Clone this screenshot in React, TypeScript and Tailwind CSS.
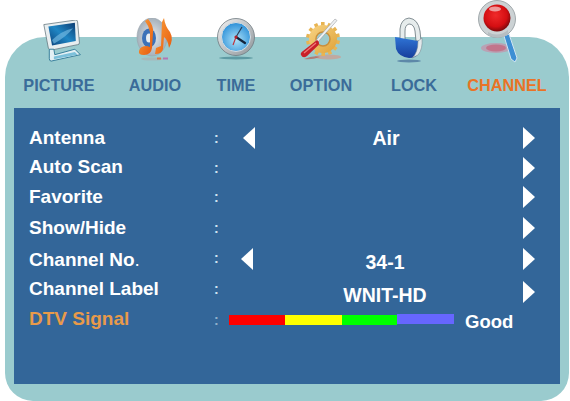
const font = { fontFamily: '"Liberation Sans", Arial, sans-serif' };

function IconPicture() {
  return (
    <svg width="44" height="42" viewBox="0 0 44 46" className="ml-[8px]">
      <defs>
        <linearGradient id="scr" x1="0" y1="1" x2="1" y2="0">
          <stop offset="0" stopColor="#0b3f78" />
          <stop offset="0.5" stopColor="#1f86c4" />
          <stop offset="1" stopColor="#0c3b70" />
        </linearGradient>
      </defs>
      <path d="M1 5 L36 0 Q38 0 38 2 L40 25 Q40 27 38 27 L9 33 Q7 33 6 31 Z" fill="#e8eef0" stroke="#5c6f78" strokeWidth="0.8" />
      <path d="M6 7 L35 3 L36 23 L10 28 Z" fill="url(#scr)" />
      <path d="M10 22 Q20 12 33 9 Q26 18 12 26 Z" fill="#6fb7df" opacity="0.7" />
      <path d="M7 32 L12 32 L13 38 L35 32 L41 38 L9 45 Q7 45 7 42 Z" fill="#e4f0f4" stroke="#2d7896" strokeWidth="1" />
      <path d="M12 40 L35 35 L38 38 L12 43 Z" fill="#7cc0da" />
    </svg>
  );
}

function IconAudio() {
  return (
    <svg width="38" height="44" viewBox="0 0 38 44">
      <defs>
        <radialGradient id="cd" cx="0.5" cy="0.5" r="0.6">
          <stop offset="0" stopColor="#e6eaef" />
          <stop offset="1" stopColor="#98a5b0" />
        </radialGradient>
        <linearGradient id="note" x1="0" y1="0" x2="1" y2="1">
          <stop offset="0" stopColor="#f9a03c" />
          <stop offset="1" stopColor="#e8590c" />
        </linearGradient>
      </defs>
      <ellipse cx="16" cy="19" rx="15" ry="19" fill="url(#cd)" stroke="#9aa5ad" strokeWidth="0.6" />
      <ellipse cx="13" cy="20" rx="7" ry="9.5" fill="#3c72b8" />
      <ellipse cx="13" cy="20" rx="3" ry="4.5" fill="#e8eef2" />
      <path d="M9 3 L12 1 Q18 8 17 15 L16 30 Q15 37 8 37 Q2 37 3 33 Q4 28 11 28 L14 29 L14 14 Q13 8 9 3 Z" fill="url(#note)" />
      <path d="M28 0 Q29 8 34 14 Q38 21 33 30 Q32 22 28 19 L27 31 Q26 36 19 36 L20 30 L25 28 L26 4 Z" fill="url(#note)" />
      <ellipse cx="16" cy="41" rx="11" ry="1.6" fill="#a6b9bb" />
      <rect x="21" y="39.5" width="4" height="2" fill="#d67a4a" />
      <rect x="27" y="39.5" width="5" height="2" fill="#b277b3" />
    </svg>
  );
}

function IconTime() {
  return (
    <svg width="40" height="42" viewBox="0 0 40 42">
      <defs>
        <radialGradient id="face" cx="0.5" cy="0.6" r="0.6">
          <stop offset="0" stopColor="#aee2f8" />
          <stop offset="1" stopColor="#2a8fd8" />
        </radialGradient>
        <linearGradient id="rim" x1="0" y1="0" x2="1" y2="1">
          <stop offset="0" stopColor="#f2f2f2" />
          <stop offset="1" stopColor="#8d9499" />
        </linearGradient>
      </defs>
      <circle cx="20" cy="19" r="18.5" fill="url(#rim)" stroke="#6f7a80" strokeWidth="0.8" />
      <circle cx="20" cy="19" r="14.5" fill="url(#face)" stroke="#d8dde0" strokeWidth="1" />
      <path d="M20 19 L29 25" stroke="#13233a" strokeWidth="2.2" strokeLinecap="round" />
      <path d="M20 19 L26 9" stroke="#2c3d55" strokeWidth="1.2" />
      <path d="M20 19 L17 27" stroke="#c0303a" strokeWidth="1.2" />
      <circle cx="20" cy="19" r="1.6" fill="#b3202a" />
      <ellipse cx="20" cy="40" rx="17" ry="1.5" fill="#5e9aa3" />
    </svg>
  );
}

function IconOption() {
  const teeth = Array.from({ length: 14 }, (_, i) => i * (360 / 14));
  return (
    <svg width="42" height="44" viewBox="0 0 42 44">
      <defs>
        <linearGradient id="gear" x1="0" y1="0" x2="1" y2="1">
          <stop offset="0" stopColor="#f8d484" />
          <stop offset="1" stopColor="#dfa238" />
        </linearGradient>
      </defs>
      <ellipse cx="28" cy="39" rx="13" ry="2.4" fill="#c0a9a0" />
      {teeth.map((a) => (
        <rect key={a} x="21" y="4" width="3.6" height="5" fill="#e8b452" transform={`rotate(${a} 23 21)`} />
      ))}
      <circle cx="23" cy="21" r="14" fill="url(#gear)" />
      <circle cx="23" cy="21" r="7" fill="#9dcacc" stroke="#c98f3c" strokeWidth="1.5" />
      <path d="M35 1 L37 2.5 L17 25 L15 23.5 Z" fill="#eef0f2" stroke="#8a8f94" strokeWidth="0.5" />
      <path d="M17 22 Q20 24 18.5 27 L7 38 Q3 41 1 37 Q0 35 3 33 Z" fill="#c8202a" />
      <path d="M4 35 L16 25" stroke="#f07a78" strokeWidth="1.2" />
      <path d="M4 41 Q14 37 20 39 Q12 42 4 41 Z" fill="#b55d55" opacity="0.7" />
    </svg>
  );
}

function IconLock() {
  return (
    <svg width="30" height="46" viewBox="0 0 30 46" className="-ml-[10px]">
      <defs>
        <linearGradient id="lockb" x1="0" y1="0" x2="0" y2="1">
          <stop offset="0" stopColor="#2f74d6" />
          <stop offset="1" stopColor="#173f9c" />
        </linearGradient>
      </defs>
      <path d="M6 24 L6 12 Q7 2 15 1 Q24 2 26 14 L27 24 L22 24 L21 14 Q20 7 15 7 Q11 8 11 14 L11 24 Z" fill="#e6ecec" stroke="#66747a" strokeWidth="0.8" />
      <path d="M1 20 L24 24 L24 37 Q22 41 15 41 Q5 40 2 32 Z" fill="url(#lockb)" />
      <path d="M24 24 L28 21 Q29 32 24 38 L18 41 Q24 36 24 24 Z" fill="#e2e8ea" stroke="#70808a" strokeWidth="0.5" />
      <ellipse cx="15" cy="44" rx="12" ry="1.4" fill="#5d88a8" />
    </svg>
  );
}

function IconChannel() {
  return (
    <svg width="42" height="64" viewBox="0 0 42 64" className="-ml-[16px]">
      <defs>
        <radialGradient id="ball" cx="0.45" cy="0.4" r="0.6">
          <stop offset="0" stopColor="#f02a2a" />
          <stop offset="0.7" stopColor="#d40e12" />
          <stop offset="1" stopColor="#7c0a0c" />
        </radialGradient>
      </defs>
      <ellipse cx="18" cy="48" rx="15" ry="5" fill="#b9a2b4" />
      <ellipse cx="18" cy="48" rx="10" ry="3.4" fill="#c46a82" opacity="0.8" />
      <path d="M26 36 L31 34 L39 58 L37 62 L33 59 Z" fill="#3d8fd4" stroke="#cfe4f2" strokeWidth="1" />
      <circle cx="19" cy="19" r="18.5" fill="#ccd2d4" stroke="#8f989c" strokeWidth="0.8" />
      <circle cx="19" cy="18" r="13.5" fill="url(#ball)" />
      <ellipse cx="17" cy="9" rx="6" ry="2.5" fill="#f4c4c4" opacity="0.75" />
      <path d="M10 32 Q20 38 30 30 L30 34 Q20 41 10 35 Z" fill="#b6bec2" />
    </svg>
  );
}

const tabs = [
  { label: 'PICTURE', icon: <IconPicture />, w: 'w-[102px]', pt: 'pt-[20px]' },
  { label: 'AUDIO', icon: <IconAudio />, w: 'w-[90px]', pt: 'pt-[18px]' },
  { label: 'TIME', icon: <IconTime />, w: 'w-[72px]', pt: 'pt-[18px]' },
  { label: 'OPTION', icon: <IconOption />, w: 'w-[98px]', pt: 'pt-[18px]' },
  { label: 'LOCK', icon: <IconLock />, w: 'w-[88px]', pt: 'pt-[17px]' },
  { label: 'CHANNEL', icon: <IconChannel />, w: 'w-[98px]', pt: 'pt-0' },
];

function ArrowL() {
  return <div className="w-0 h-0 border-y-[11px] border-y-transparent border-r-[12px] border-r-white" />;
}
function ArrowR() {
  return <div className="w-0 h-0 border-y-[11px] border-y-transparent border-l-[12px] border-l-white" />;
}

const rows = [
  { label: 'Antenna', dot: '', h: 'h-[30px]', left: true, value: 'Air', lm: '', vm: 'mt-[2px]', am: 'ml-[2px]', rm: '', cm: '' },
  { label: 'Auto Scan', dot: '', h: 'h-[29px]', lm: '', vm: '', am: '', rm: '', cm: '' },
  { label: 'Favorite', dot: '', h: 'h-[30px]', lm: 'mt-[1px]', vm: '', am: '', rm: '', cm: '' },
  { label: 'Show/Hide', dot: '', h: 'h-[31px]', lm: 'mt-[1px]', vm: '', am: '', rm: '', cm: '' },
  { label: 'Channel No', dot: '.', h: 'h-[32px]', left: true, value: '34-1', lm: 'mt-[3px]', vm: 'mt-[7px]', am: '', rm: '', cm: '-mt-[3px]' },
  { label: 'Channel Label', dot: '', h: 'h-[28px]', value: 'WNIT-HD', lm: '', vm: 'mt-[13px]', am: '', rm: 'mt-[5px]', cm: '' },
];

function Colon({ dim, cm }: { dim?: boolean; cm?: string }) {
  return <span className={`w-[28px] pl-[1px] text-[14px] font-bold leading-none ${cm ?? ''} ${dim ? 'text-[#8fb0cc]' : 'text-[#cfe3f2]'}`}>:</span>;
}

export default function App() {
  return (
    <div className="w-[570px] h-[401px] bg-white overflow-hidden pt-[37px] pl-[5px]" style={font}>
      <div className="w-[564px] h-[364px] flex flex-col bg-[#9acbce] rounded-t-[40px] rounded-b-[28px]">
        <div className="flex -mt-[37px] pl-[3px] h-[71px] items-start">
          {tabs.map((t) => (
            <div key={t.label} className={`${t.w} h-full flex flex-col items-center ${t.pt}`}>
              {t.icon}
            </div>
          ))}
        </div>
        <div className="flex pl-[3px] h-[37px] pt-[4px] items-start">
          {tabs.map((t) => (
            <div
              key={t.label}
              className={`${t.w} text-center text-[16.3px] leading-[20px] font-bold ${t.label === 'CHANNEL' ? 'text-[#ea7326]' : 'text-[#3a6c99]'}`}
            >
              {t.label}
            </div>
          ))}
        </div>
        <div className="ml-[9px] w-[546px] h-[276px] bg-[#336699] pt-[15px] pl-[15px] pr-[25px]">
          {rows.map((r) => (
            <div key={r.label} className={`flex items-center ${r.h} text-white font-bold text-[19px]`}>
              <span className={`w-[184px] ${r.lm}`}>
                {r.label}
                <span className="font-normal">{r.dot}</span>
              </span>
              <Colon cm={r.cm} />
              <span className={`w-[22px] ${r.am}`}>{r.left && <ArrowL />}</span>
              <span className={`flex-1 text-center pr-[16px] text-[19.5px] ${r.vm}`}>{r.value}</span>
              <span className={r.rm}>
                <ArrowR />
              </span>
            </div>
          ))}
          <div className="flex items-center h-[36px] font-bold text-[19px]">
            <span className="w-[184px] -mt-[4px] text-[#e89a4a]">DTV Signal</span>
            <Colon dim cm="-mt-[3px]" />
            <div className="flex -ml-[12px] -mt-[3px] items-start">
              <div className="w-[56px] h-[10px] mt-[1px] bg-[#ff0000]" />
              <div className="w-[57px] h-[10px] mt-[1px] bg-[#ffff00]" />
              <div className="w-[55px] h-[10px] mt-[1px] bg-[#00ff00]" />
              <div className="w-[57px] h-[10px] bg-[#6666ff]" />
            </div>
            <span className="ml-[11px] mt-[2px] text-white text-[18.5px]">Good</span>
          </div>
        </div>
      </div>
    </div>
  );
}
